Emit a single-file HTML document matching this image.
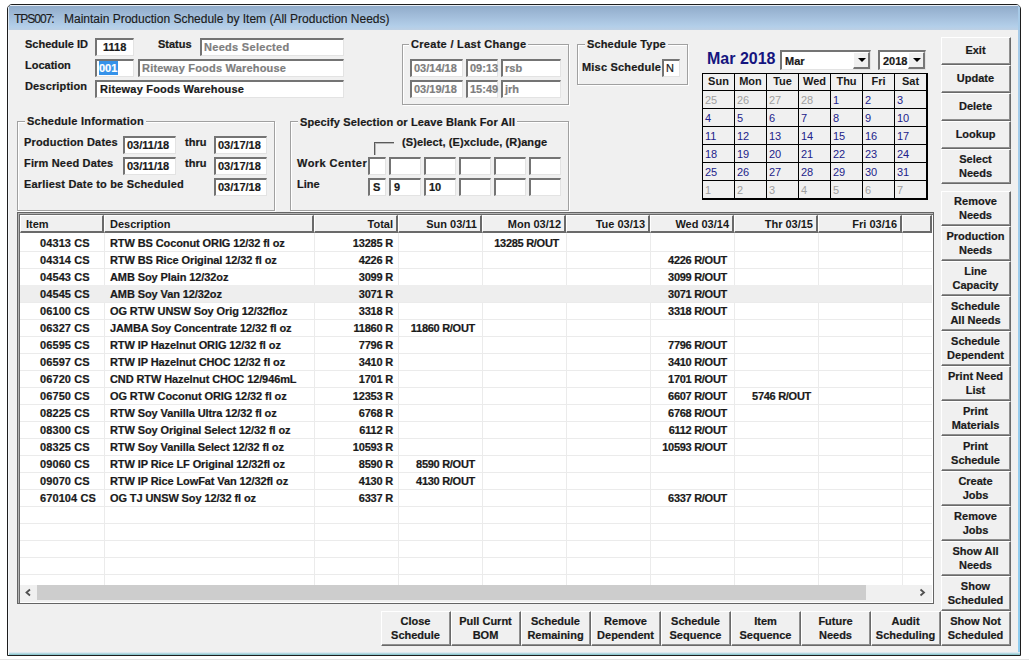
<!DOCTYPE html><html><head><meta charset="utf-8"><style>
*{margin:0;padding:0;box-sizing:border-box}
html,body{width:1029px;height:661px;overflow:hidden;background:#fff;font-family:"Liberation Sans",sans-serif}
.a{position:absolute}
.t{position:absolute;white-space:nowrap;font-weight:bold;font-size:11px;color:#1a1a1a;line-height:13px}
.box{position:absolute;background:#fff;border-top:2px solid #747474;border-left:2px solid #747474;border-right:1px solid #e3e3e3;border-bottom:1px solid #e3e3e3}
.grp{position:absolute;border:1px solid #a0a0a0;box-shadow:1px 1px 0 #fff, inset 1px 1px 0 #fff}
.gt{position:absolute;background:#f0f0f0;padding:0 2px 0 2px;font-weight:bold;font-size:11px;color:#1a1a1a;white-space:nowrap;line-height:13px}
.btn{position:absolute;background:#f0f0f0;border-top:1px solid #fff;border-left:1px solid #fff;border-right:1px solid #696969;border-bottom:1px solid #696969;box-shadow:inset -1px -1px 0 #8f8f8f;font-weight:bold;font-size:11px;color:#1a1a1a;text-align:center;line-height:14px;display:flex;align-items:center;justify-content:center;white-space:nowrap;padding-bottom:2px;padding-right:1px}
.gray{color:#8a8a8a}
.t,.gt,.btn,.box span{-webkit-text-stroke:0.2px currentColor}
</style></head><body>
<div class="a" style="left:0;top:659px;width:1029px;height:1px;background:#e4e4e4"></div>
<div class="a" style="left:7px;top:4px;width:1014px;height:652px;border:1px solid #1e1e1e;border-radius:5px 5px 0 0;background:#f0f0f0;overflow:hidden"><div class="a" style="left:0;top:0;width:1012px;height:25px;background:linear-gradient(#91acca 0%,#a3bedb 45%,#b3cfe9 85%,#bdd0e4 100%);border-top:1px solid #e8eef5;border-left:1px solid #dde8f3"></div><div class="a" style="left:1010px;top:0;width:2px;height:650px;background:linear-gradient(#a8cbe8,#8ecdf0)"></div><div class="a" style="left:0;top:647px;width:1012px;height:3px;background:linear-gradient(#eceff7,#7cc0c8)"></div><div class="a" style="left:0;top:25px;width:1px;height:625px;background:#f6f8fb"></div></div>
<div class="a" style="left:14px;top:12px;font-size:12px;color:#1b1b1b;white-space:nowrap;letter-spacing:-1px;line-height:15px;-webkit-text-stroke:0.15px #1b1b1b">TPS007:</div>
<div class="a" style="left:64px;top:12px;font-size:12px;color:#1b1b1b;white-space:nowrap;line-height:15px;-webkit-text-stroke:0.15px #1b1b1b">Maintain Production Schedule by Item (All Production Needs)</div>
<div class="t" style="left:25px;top:38px;">Schedule ID</div>
<div class="t" style="left:25px;top:59px;">Location</div>
<div class="t" style="left:25px;top:80px;letter-spacing:0.15px">Description</div>
<div class="t" style="left:158px;top:38px;">Status</div>
<div class="box" style="left:95px;top:38px;width:39px;height:18px"><span class="a" style="left:6px;top:1px;font-size:11px;font-weight:bold;color:#1a1a1a;white-space:nowrap;line-height:13px;">1118</span></div>
<div class="box" style="left:95px;top:59px;width:39px;height:18px"><span class="a" style="left:2px;top:0px;width:19px;height:14px;background:#3592ea"></span><span class="a" style="left:2px;top:1px;font-size:11px;font-weight:bold;color:#fff;line-height:13px">001</span></div>
<div class="box" style="left:138px;top:59px;width:206px;height:18px"><span class="a" style="left:2px;top:1px;font-size:11px;font-weight:bold;color:#7e7e7e;white-space:nowrap;line-height:13px;letter-spacing:0.2px">Riteway Foods Warehouse</span></div>
<div class="box" style="left:200px;top:38px;width:144px;height:18px"><span class="a" style="left:2px;top:1px;font-size:11px;font-weight:bold;color:#7e7e7e;white-space:nowrap;line-height:13px;letter-spacing:0.3px">Needs Selected</span></div>
<div class="box" style="left:95px;top:80px;width:249px;height:18px"><span class="a" style="left:3px;top:1px;font-size:11px;font-weight:bold;color:#1a1a1a;white-space:nowrap;line-height:13px;letter-spacing:0.2px">Riteway Foods Warehouse</span></div>
<div class="grp" style="left:402px;top:44px;width:167px;height:61px"></div>
<div class="gt" style="left:409px;top:38px;letter-spacing:0.3px">Create / Last Change</div>
<div class="box" style="left:410px;top:59px;width:53px;height:18px"><span class="a" style="left:2px;top:1px;font-size:11px;font-weight:bold;color:#7e7e7e;white-space:nowrap;line-height:13px;">03/14/18</span></div>
<div class="box" style="left:466px;top:59px;width:32px;height:18px"><span class="a" style="left:2px;top:1px;font-size:11px;font-weight:bold;color:#7e7e7e;white-space:nowrap;line-height:13px;">09:13</span></div>
<div class="box" style="left:501px;top:59px;width:60px;height:18px"><span class="a" style="left:2px;top:1px;font-size:11px;font-weight:bold;color:#7e7e7e;white-space:nowrap;line-height:13px;">rsb</span></div>
<div class="box" style="left:410px;top:80px;width:53px;height:18px"><span class="a" style="left:2px;top:1px;font-size:11px;font-weight:bold;color:#7e7e7e;white-space:nowrap;line-height:13px;">03/19/18</span></div>
<div class="box" style="left:466px;top:80px;width:32px;height:18px"><span class="a" style="left:2px;top:1px;font-size:11px;font-weight:bold;color:#7e7e7e;white-space:nowrap;line-height:13px;">15:49</span></div>
<div class="box" style="left:501px;top:80px;width:60px;height:18px"><span class="a" style="left:2px;top:1px;font-size:11px;font-weight:bold;color:#7e7e7e;white-space:nowrap;line-height:13px;">jrh</span></div>
<div class="grp" style="left:577px;top:44px;width:111px;height:41px"></div>
<div class="gt" style="left:585px;top:38px;letter-spacing:0.15px">Schedule Type</div>
<div class="t" style="left:582px;top:61px;letter-spacing:0.2px">Misc Schedule</div>
<div class="box" style="left:662px;top:59px;width:18px;height:18px"><span class="a" style="left:2px;top:1px;font-size:11px;font-weight:normal;color:#1a1a1a;white-space:nowrap;line-height:13px;">N</span></div>
<div class="grp" style="left:17px;top:121px;width:258px;height:90px"></div>
<div class="gt" style="left:25px;top:115px;letter-spacing:0.22px">Schedule Information</div>
<div class="t" style="left:24px;top:136px;letter-spacing:0.17px">Production Dates</div>
<div class="t" style="left:24px;top:157px;letter-spacing:0.17px">Firm Need Dates</div>
<div class="t" style="left:24px;top:178px;letter-spacing:0.18px">Earliest Date to be Scheduled</div>
<div class="t" style="left:185px;top:136px;">thru</div>
<div class="t" style="left:185px;top:157px;">thru</div>
<div class="box" style="left:123px;top:136px;width:53px;height:18px"><span class="a" style="left:2px;top:1px;font-size:11px;font-weight:bold;color:#1a1a1a;white-space:nowrap;line-height:13px;">03/11/18</span></div>
<div class="box" style="left:214px;top:136px;width:53px;height:18px"><span class="a" style="left:2px;top:1px;font-size:11px;font-weight:bold;color:#1a1a1a;white-space:nowrap;line-height:13px;">03/17/18</span></div>
<div class="box" style="left:123px;top:157px;width:53px;height:18px"><span class="a" style="left:2px;top:1px;font-size:11px;font-weight:bold;color:#1a1a1a;white-space:nowrap;line-height:13px;">03/11/18</span></div>
<div class="box" style="left:214px;top:157px;width:53px;height:18px"><span class="a" style="left:2px;top:1px;font-size:11px;font-weight:bold;color:#1a1a1a;white-space:nowrap;line-height:13px;">03/17/18</span></div>
<div class="box" style="left:214px;top:178px;width:53px;height:18px"><span class="a" style="left:2px;top:1px;font-size:11px;font-weight:bold;color:#1a1a1a;white-space:nowrap;line-height:13px;">03/17/18</span></div>
<div class="grp" style="left:290px;top:121px;width:279px;height:90px"></div>
<div class="gt" style="left:298px;top:116px;letter-spacing:0.13px">Specify Selection or Leave Blank For All</div>
<div class="t" style="left:402px;top:136px;letter-spacing:0.1px">(S)elect, (E)xclude, (R)ange</div>
<div class="a" style="left:374px;top:142px;width:20px;height:1px;background:#5a5a5a"></div><div class="a" style="left:375px;top:143px;width:19px;height:1px;background:#b8b8b8"></div>
<div class="a" style="left:374px;top:142px;width:1px;height:13px;background:#5a5a5a"></div><div class="a" style="left:375px;top:143px;width:1px;height:12px;background:#b8b8b8"></div>
<div class="t" style="left:297px;top:157px;letter-spacing:0.45px">Work Center</div>
<div class="t" style="left:297px;top:178px;">Line</div>
<div class="box" style="left:368px;top:157px;width:18px;height:18px"></div>
<div class="box" style="left:389px;top:157px;width:32px;height:18px"></div>
<div class="box" style="left:424px;top:157px;width:32px;height:18px"></div>
<div class="box" style="left:459px;top:157px;width:32px;height:18px"></div>
<div class="box" style="left:494px;top:157px;width:32px;height:18px"></div>
<div class="box" style="left:529px;top:157px;width:32px;height:18px"></div>
<div class="box" style="left:368px;top:178px;width:18px;height:18px"><span class="a" style="left:3px;top:1px;font-size:11px;font-weight:bold;color:#1a1a1a;white-space:nowrap;line-height:13px;">S</span></div>
<div class="box" style="left:389px;top:178px;width:32px;height:18px"><span class="a" style="left:3px;top:1px;font-size:11px;font-weight:bold;color:#1a1a1a;white-space:nowrap;line-height:13px;">9</span></div>
<div class="box" style="left:424px;top:178px;width:32px;height:18px"><span class="a" style="left:3px;top:1px;font-size:11px;font-weight:bold;color:#1a1a1a;white-space:nowrap;line-height:13px;">10</span></div>
<div class="box" style="left:459px;top:178px;width:32px;height:18px"></div>
<div class="box" style="left:494px;top:178px;width:32px;height:18px"></div>
<div class="box" style="left:529px;top:178px;width:32px;height:18px"></div>
<div class="a" style="left:707px;top:50px;font-size:16px;font-weight:bold;color:#15157f;white-space:nowrap;line-height:18px">Mar 2018</div>
<div class="box" style="left:780px;top:50px;width:91px;height:20px"><span class="a" style="left:3px;top:3px;font-size:11px;font-weight:bold;color:#1a1a1a;line-height:13px">Mar</span><span class="a" style="right:0;top:0;width:17px;height:17px;background:#f0f0f0;border-top:1px solid #fff;border-left:1px solid #fff;border-right:2px solid #777;border-bottom:2px solid #777"></span><span class="a" style="right:4px;top:6px;width:0;height:0;border-left:4px solid transparent;border-right:4px solid transparent;border-top:4px solid #000"></span></div>
<div class="box" style="left:878px;top:50px;width:48px;height:20px"><span class="a" style="left:3px;top:3px;font-size:11px;font-weight:bold;color:#1a1a1a;line-height:13px">2018</span><span class="a" style="right:0;top:0;width:17px;height:17px;background:#f0f0f0;border-top:1px solid #fff;border-left:1px solid #fff;border-right:2px solid #777;border-bottom:2px solid #777"></span><span class="a" style="right:4px;top:6px;width:0;height:0;border-left:4px solid transparent;border-right:4px solid transparent;border-top:4px solid #000"></span></div>
<div class="a" style="left:702px;top:73px;width:226px;height:127px;background:#000"></div>
<div class="a" style="left:703px;top:74px;width:31px;height:16px;background:#f0f0f0"><span style="display:block;text-align:center;font-size:11px;font-weight:bold;color:#1a1a1a;line-height:13px;padding-top:1px">Sun</span></div>
<div class="a" style="left:735px;top:74px;width:31px;height:16px;background:#f0f0f0"><span style="display:block;text-align:center;font-size:11px;font-weight:bold;color:#1a1a1a;line-height:13px;padding-top:1px">Mon</span></div>
<div class="a" style="left:767px;top:74px;width:31px;height:16px;background:#f0f0f0"><span style="display:block;text-align:center;font-size:11px;font-weight:bold;color:#1a1a1a;line-height:13px;padding-top:1px">Tue</span></div>
<div class="a" style="left:799px;top:74px;width:31px;height:16px;background:#f0f0f0"><span style="display:block;text-align:center;font-size:11px;font-weight:bold;color:#1a1a1a;line-height:13px;padding-top:1px">Wed</span></div>
<div class="a" style="left:831px;top:74px;width:31px;height:16px;background:#f0f0f0"><span style="display:block;text-align:center;font-size:11px;font-weight:bold;color:#1a1a1a;line-height:13px;padding-top:1px">Thu</span></div>
<div class="a" style="left:863px;top:74px;width:31px;height:16px;background:#f0f0f0"><span style="display:block;text-align:center;font-size:11px;font-weight:bold;color:#1a1a1a;line-height:13px;padding-top:1px">Fri</span></div>
<div class="a" style="left:895px;top:74px;width:31px;height:16px;background:#f0f0f0"><span style="display:block;text-align:center;font-size:11px;font-weight:bold;color:#1a1a1a;line-height:13px;padding-top:1px">Sat</span></div>
<div class="a" style="left:703px;top:91px;width:31px;height:17px;background:#f0f0f0"><span class="a" style="left:2px;top:3px;font-size:11px;color:#a0a0a0;line-height:13px">25</span></div>
<div class="a" style="left:735px;top:91px;width:31px;height:17px;background:#f0f0f0"><span class="a" style="left:2px;top:3px;font-size:11px;color:#a0a0a0;line-height:13px">26</span></div>
<div class="a" style="left:767px;top:91px;width:31px;height:17px;background:#f0f0f0"><span class="a" style="left:2px;top:3px;font-size:11px;color:#a0a0a0;line-height:13px">27</span></div>
<div class="a" style="left:799px;top:91px;width:31px;height:17px;background:#f0f0f0"><span class="a" style="left:2px;top:3px;font-size:11px;color:#a0a0a0;line-height:13px">28</span></div>
<div class="a" style="left:831px;top:91px;width:31px;height:17px;background:#f0f0f0"><span class="a" style="left:2px;top:3px;font-size:11px;color:#22228a;line-height:13px">1</span></div>
<div class="a" style="left:863px;top:91px;width:31px;height:17px;background:#f0f0f0"><span class="a" style="left:2px;top:3px;font-size:11px;color:#22228a;line-height:13px">2</span></div>
<div class="a" style="left:895px;top:91px;width:31px;height:17px;background:#f0f0f0"><span class="a" style="left:2px;top:3px;font-size:11px;color:#22228a;line-height:13px">3</span></div>
<div class="a" style="left:703px;top:109px;width:31px;height:17px;background:#f0f0f0"><span class="a" style="left:2px;top:3px;font-size:11px;color:#22228a;line-height:13px">4</span></div>
<div class="a" style="left:735px;top:109px;width:31px;height:17px;background:#f0f0f0"><span class="a" style="left:2px;top:3px;font-size:11px;color:#22228a;line-height:13px">5</span></div>
<div class="a" style="left:767px;top:109px;width:31px;height:17px;background:#f0f0f0"><span class="a" style="left:2px;top:3px;font-size:11px;color:#22228a;line-height:13px">6</span></div>
<div class="a" style="left:799px;top:109px;width:31px;height:17px;background:#f0f0f0"><span class="a" style="left:2px;top:3px;font-size:11px;color:#22228a;line-height:13px">7</span></div>
<div class="a" style="left:831px;top:109px;width:31px;height:17px;background:#f0f0f0"><span class="a" style="left:2px;top:3px;font-size:11px;color:#22228a;line-height:13px">8</span></div>
<div class="a" style="left:863px;top:109px;width:31px;height:17px;background:#f0f0f0"><span class="a" style="left:2px;top:3px;font-size:11px;color:#22228a;line-height:13px">9</span></div>
<div class="a" style="left:895px;top:109px;width:31px;height:17px;background:#f0f0f0"><span class="a" style="left:2px;top:3px;font-size:11px;color:#22228a;line-height:13px">10</span></div>
<div class="a" style="left:703px;top:127px;width:31px;height:17px;background:#f0f0f0"><span class="a" style="left:2px;top:3px;font-size:11px;color:#22228a;line-height:13px">11</span></div>
<div class="a" style="left:735px;top:127px;width:31px;height:17px;background:#f0f0f0"><span class="a" style="left:2px;top:3px;font-size:11px;color:#22228a;line-height:13px">12</span></div>
<div class="a" style="left:767px;top:127px;width:31px;height:17px;background:#f0f0f0"><span class="a" style="left:2px;top:3px;font-size:11px;color:#22228a;line-height:13px">13</span></div>
<div class="a" style="left:799px;top:127px;width:31px;height:17px;background:#f0f0f0"><span class="a" style="left:2px;top:3px;font-size:11px;color:#22228a;line-height:13px">14</span></div>
<div class="a" style="left:831px;top:127px;width:31px;height:17px;background:#f0f0f0"><span class="a" style="left:2px;top:3px;font-size:11px;color:#22228a;line-height:13px">15</span></div>
<div class="a" style="left:863px;top:127px;width:31px;height:17px;background:#f0f0f0"><span class="a" style="left:2px;top:3px;font-size:11px;color:#22228a;line-height:13px">16</span></div>
<div class="a" style="left:895px;top:127px;width:31px;height:17px;background:#f0f0f0"><span class="a" style="left:2px;top:3px;font-size:11px;color:#22228a;line-height:13px">17</span></div>
<div class="a" style="left:703px;top:145px;width:31px;height:17px;background:#f0f0f0"><span class="a" style="left:2px;top:3px;font-size:11px;color:#22228a;line-height:13px">18</span></div>
<div class="a" style="left:735px;top:145px;width:31px;height:17px;background:#f0f0f0"><span class="a" style="left:2px;top:3px;font-size:11px;color:#22228a;line-height:13px">19</span></div>
<div class="a" style="left:767px;top:145px;width:31px;height:17px;background:#f0f0f0"><span class="a" style="left:2px;top:3px;font-size:11px;color:#22228a;line-height:13px">20</span></div>
<div class="a" style="left:799px;top:145px;width:31px;height:17px;background:#f0f0f0"><span class="a" style="left:2px;top:3px;font-size:11px;color:#22228a;line-height:13px">21</span></div>
<div class="a" style="left:831px;top:145px;width:31px;height:17px;background:#f0f0f0"><span class="a" style="left:2px;top:3px;font-size:11px;color:#22228a;line-height:13px">22</span></div>
<div class="a" style="left:863px;top:145px;width:31px;height:17px;background:#f0f0f0"><span class="a" style="left:2px;top:3px;font-size:11px;color:#22228a;line-height:13px">23</span></div>
<div class="a" style="left:895px;top:145px;width:31px;height:17px;background:#f0f0f0"><span class="a" style="left:2px;top:3px;font-size:11px;color:#22228a;line-height:13px">24</span></div>
<div class="a" style="left:703px;top:163px;width:31px;height:17px;background:#f0f0f0"><span class="a" style="left:2px;top:3px;font-size:11px;color:#22228a;line-height:13px">25</span></div>
<div class="a" style="left:735px;top:163px;width:31px;height:17px;background:#f0f0f0"><span class="a" style="left:2px;top:3px;font-size:11px;color:#22228a;line-height:13px">26</span></div>
<div class="a" style="left:767px;top:163px;width:31px;height:17px;background:#f0f0f0"><span class="a" style="left:2px;top:3px;font-size:11px;color:#22228a;line-height:13px">27</span></div>
<div class="a" style="left:799px;top:163px;width:31px;height:17px;background:#f0f0f0"><span class="a" style="left:2px;top:3px;font-size:11px;color:#22228a;line-height:13px">28</span></div>
<div class="a" style="left:831px;top:163px;width:31px;height:17px;background:#f0f0f0"><span class="a" style="left:2px;top:3px;font-size:11px;color:#22228a;line-height:13px">29</span></div>
<div class="a" style="left:863px;top:163px;width:31px;height:17px;background:#f0f0f0"><span class="a" style="left:2px;top:3px;font-size:11px;color:#22228a;line-height:13px">30</span></div>
<div class="a" style="left:895px;top:163px;width:31px;height:17px;background:#f0f0f0"><span class="a" style="left:2px;top:3px;font-size:11px;color:#22228a;line-height:13px">31</span></div>
<div class="a" style="left:703px;top:181px;width:31px;height:17px;background:#f0f0f0"><span class="a" style="left:2px;top:3px;font-size:11px;color:#a0a0a0;line-height:13px">1</span></div>
<div class="a" style="left:735px;top:181px;width:31px;height:17px;background:#f0f0f0"><span class="a" style="left:2px;top:3px;font-size:11px;color:#a0a0a0;line-height:13px">2</span></div>
<div class="a" style="left:767px;top:181px;width:31px;height:17px;background:#f0f0f0"><span class="a" style="left:2px;top:3px;font-size:11px;color:#a0a0a0;line-height:13px">3</span></div>
<div class="a" style="left:799px;top:181px;width:31px;height:17px;background:#f0f0f0"><span class="a" style="left:2px;top:3px;font-size:11px;color:#a0a0a0;line-height:13px">4</span></div>
<div class="a" style="left:831px;top:181px;width:31px;height:17px;background:#f0f0f0"><span class="a" style="left:2px;top:3px;font-size:11px;color:#a0a0a0;line-height:13px">5</span></div>
<div class="a" style="left:863px;top:181px;width:31px;height:17px;background:#f0f0f0"><span class="a" style="left:2px;top:3px;font-size:11px;color:#a0a0a0;line-height:13px">6</span></div>
<div class="a" style="left:895px;top:181px;width:31px;height:17px;background:#f0f0f0"><span class="a" style="left:2px;top:3px;font-size:11px;color:#a0a0a0;line-height:13px">7</span></div>
<div class="btn" style="left:941px;top:37px;width:70px;height:28px">Exit</div>
<div class="btn" style="left:941px;top:65px;width:70px;height:28px">Update</div>
<div class="btn" style="left:941px;top:93px;width:70px;height:28px">Delete</div>
<div class="btn" style="left:941px;top:121px;width:70px;height:28px">Lookup</div>
<div class="btn" style="left:941px;top:149px;width:70px;height:35px">Select<br>Needs</div>
<div class="btn" style="left:941px;top:191px;width:70px;height:35px">Remove<br>Needs</div>
<div class="btn" style="left:941px;top:226px;width:70px;height:35px">Production<br>Needs</div>
<div class="btn" style="left:941px;top:261px;width:70px;height:35px">Line<br>Capacity</div>
<div class="btn" style="left:941px;top:296px;width:70px;height:35px">Schedule<br>All Needs</div>
<div class="btn" style="left:941px;top:331px;width:70px;height:35px">Schedule<br>Dependent</div>
<div class="btn" style="left:941px;top:366px;width:70px;height:35px">Print Need<br>List</div>
<div class="btn" style="left:941px;top:401px;width:70px;height:35px">Print<br>Materials</div>
<div class="btn" style="left:941px;top:436px;width:70px;height:35px">Print<br>Schedule</div>
<div class="btn" style="left:941px;top:471px;width:70px;height:35px">Create<br>Jobs</div>
<div class="btn" style="left:941px;top:506px;width:70px;height:35px">Remove<br>Jobs</div>
<div class="btn" style="left:941px;top:541px;width:70px;height:35px">Show All<br>Needs</div>
<div class="btn" style="left:941px;top:576px;width:70px;height:35px">Show<br>Scheduled</div>
<div class="btn" style="left:941px;top:611px;width:70px;height:35px">Show Not<br>Scheduled</div>
<div class="btn" style="left:381px;top:611px;width:70px;height:35px">Close<br>Schedule</div>
<div class="btn" style="left:451px;top:611px;width:70px;height:35px">Pull Curnt<br>BOM</div>
<div class="btn" style="left:521px;top:611px;width:70px;height:35px">Schedule<br>Remaining</div>
<div class="btn" style="left:591px;top:611px;width:70px;height:35px">Remove<br>Dependent</div>
<div class="btn" style="left:661px;top:611px;width:70px;height:35px">Schedule<br>Sequence</div>
<div class="btn" style="left:731px;top:611px;width:70px;height:35px">Item<br>Sequence</div>
<div class="btn" style="left:801px;top:611px;width:70px;height:35px">Future<br>Needs</div>
<div class="btn" style="left:871px;top:611px;width:70px;height:35px">Audit<br>Scheduling</div>
<div class="a" style="left:17px;top:212px;width:917px;height:392px;border:1px solid #646464;background:#fff"><div class="a" style="left:0;top:0;width:915px;height:1px;background:#b4b4b4"></div><div class="a" style="left:1px;top:1px;width:914px;height:1px;background:#6a6a6a"></div><div class="a" style="left:0;top:0;width:1px;height:390px;background:#b4b4b4"></div><div class="a" style="left:1px;top:1px;width:1px;height:389px;background:#6a6a6a"></div></div>
<div class="a" style="left:20px;top:215px;width:84px;height:18px;background:#f0f0f0;border-top:1px solid #fff;border-left:1px solid #fff;border-right:2px solid #6a6a6a;border-bottom:2px solid #6a6a6a;font-size:11px;font-weight:bold;color:#1a1a1a;text-align:left;padding-left:5px;line-height:13px;padding-top:2px;white-space:nowrap">Item</div>
<div class="a" style="left:104px;top:215px;width:210px;height:18px;background:#f0f0f0;border-top:1px solid #fff;border-left:1px solid #fff;border-right:2px solid #6a6a6a;border-bottom:2px solid #6a6a6a;font-size:11px;font-weight:bold;color:#1a1a1a;text-align:left;padding-left:5px;line-height:13px;padding-top:2px;white-space:nowrap">Description</div>
<div class="a" style="left:314px;top:215px;width:84px;height:18px;background:#f0f0f0;border-top:1px solid #fff;border-left:1px solid #fff;border-right:2px solid #6a6a6a;border-bottom:2px solid #6a6a6a;font-size:11px;font-weight:bold;color:#1a1a1a;text-align:right;padding-right:3px;line-height:13px;padding-top:2px;white-space:nowrap">Total</div>
<div class="a" style="left:398px;top:215px;width:84px;height:18px;background:#f0f0f0;border-top:1px solid #fff;border-left:1px solid #fff;border-right:2px solid #6a6a6a;border-bottom:2px solid #6a6a6a;font-size:11px;font-weight:bold;color:#1a1a1a;text-align:right;padding-right:3px;line-height:13px;padding-top:2px;white-space:nowrap">Sun 03/11</div>
<div class="a" style="left:482px;top:215px;width:84px;height:18px;background:#f0f0f0;border-top:1px solid #fff;border-left:1px solid #fff;border-right:2px solid #6a6a6a;border-bottom:2px solid #6a6a6a;font-size:11px;font-weight:bold;color:#1a1a1a;text-align:right;padding-right:3px;line-height:13px;padding-top:2px;white-space:nowrap">Mon 03/12</div>
<div class="a" style="left:566px;top:215px;width:84px;height:18px;background:#f0f0f0;border-top:1px solid #fff;border-left:1px solid #fff;border-right:2px solid #6a6a6a;border-bottom:2px solid #6a6a6a;font-size:11px;font-weight:bold;color:#1a1a1a;text-align:right;padding-right:3px;line-height:13px;padding-top:2px;white-space:nowrap">Tue 03/13</div>
<div class="a" style="left:650px;top:215px;width:84px;height:18px;background:#f0f0f0;border-top:1px solid #fff;border-left:1px solid #fff;border-right:2px solid #6a6a6a;border-bottom:2px solid #6a6a6a;font-size:11px;font-weight:bold;color:#1a1a1a;text-align:right;padding-right:3px;line-height:13px;padding-top:2px;white-space:nowrap">Wed 03/14</div>
<div class="a" style="left:734px;top:215px;width:84px;height:18px;background:#f0f0f0;border-top:1px solid #fff;border-left:1px solid #fff;border-right:2px solid #6a6a6a;border-bottom:2px solid #6a6a6a;font-size:11px;font-weight:bold;color:#1a1a1a;text-align:right;padding-right:3px;line-height:13px;padding-top:2px;white-space:nowrap">Thr 03/15</div>
<div class="a" style="left:818px;top:215px;width:84px;height:18px;background:#f0f0f0;border-top:1px solid #fff;border-left:1px solid #fff;border-right:2px solid #6a6a6a;border-bottom:2px solid #6a6a6a;font-size:11px;font-weight:bold;color:#1a1a1a;text-align:right;padding-right:3px;line-height:13px;padding-top:2px;white-space:nowrap">Fri 03/16</div>
<div class="a" style="left:902px;top:215px;width:30px;height:18px;background:#f0f0f0;border-top:1px solid #fff;border-left:1px solid #fff;border-right:2px solid #6a6a6a;border-bottom:2px solid #6a6a6a;font-size:11px;font-weight:bold;color:#1a1a1a;text-align:right;padding-right:3px;line-height:13px;padding-top:2px;white-space:nowrap"></div>
<div class="a" style="left:20px;top:251px;width:912px;height:1px;background:#ebebeb"></div>
<div class="a" style="left:20px;top:268px;width:912px;height:1px;background:#ebebeb"></div>
<div class="a" style="left:20px;top:285px;width:912px;height:1px;background:#ebebeb"></div>
<div class="a" style="left:20px;top:302px;width:912px;height:1px;background:#ebebeb"></div>
<div class="a" style="left:20px;top:319px;width:912px;height:1px;background:#ebebeb"></div>
<div class="a" style="left:20px;top:336px;width:912px;height:1px;background:#ebebeb"></div>
<div class="a" style="left:20px;top:353px;width:912px;height:1px;background:#ebebeb"></div>
<div class="a" style="left:20px;top:370px;width:912px;height:1px;background:#ebebeb"></div>
<div class="a" style="left:20px;top:387px;width:912px;height:1px;background:#ebebeb"></div>
<div class="a" style="left:20px;top:404px;width:912px;height:1px;background:#ebebeb"></div>
<div class="a" style="left:20px;top:421px;width:912px;height:1px;background:#ebebeb"></div>
<div class="a" style="left:20px;top:438px;width:912px;height:1px;background:#ebebeb"></div>
<div class="a" style="left:20px;top:455px;width:912px;height:1px;background:#ebebeb"></div>
<div class="a" style="left:20px;top:472px;width:912px;height:1px;background:#ebebeb"></div>
<div class="a" style="left:20px;top:489px;width:912px;height:1px;background:#ebebeb"></div>
<div class="a" style="left:20px;top:506px;width:912px;height:1px;background:#ebebeb"></div>
<div class="a" style="left:20px;top:523px;width:912px;height:1px;background:#ebebeb"></div>
<div class="a" style="left:20px;top:540px;width:912px;height:1px;background:#ebebeb"></div>
<div class="a" style="left:20px;top:557px;width:912px;height:1px;background:#ebebeb"></div>
<div class="a" style="left:20px;top:574px;width:912px;height:1px;background:#ebebeb"></div>
<div class="a" style="left:104px;top:233px;width:1px;height:352px;background:#ebebeb"></div>
<div class="a" style="left:314px;top:233px;width:1px;height:352px;background:#ebebeb"></div>
<div class="a" style="left:398px;top:233px;width:1px;height:352px;background:#ebebeb"></div>
<div class="a" style="left:482px;top:233px;width:1px;height:352px;background:#ebebeb"></div>
<div class="a" style="left:566px;top:233px;width:1px;height:352px;background:#ebebeb"></div>
<div class="a" style="left:650px;top:233px;width:1px;height:352px;background:#ebebeb"></div>
<div class="a" style="left:734px;top:233px;width:1px;height:352px;background:#ebebeb"></div>
<div class="a" style="left:818px;top:233px;width:1px;height:352px;background:#ebebeb"></div>
<div class="a" style="left:902px;top:233px;width:1px;height:352px;background:#ebebeb"></div>
<div class="a" style="left:20px;top:285px;width:912px;height:17px;background:#eeeeee"></div>
<div class="t" style="left:40px;top:237px;letter-spacing:0.1px">04313 CS</div>
<div class="t" style="left:110px;top:237px;letter-spacing:-0.1px">RTW BS Coconut ORIG 12/32 fl oz</div>
<div class="t" style="left:314px;width:79px;text-align:right;top:237px;letter-spacing:-0.2px">13285 R</div>
<div class="t" style="left:482px;width:77px;text-align:right;top:237px;letter-spacing:-0.28px">13285 R/OUT</div>
<div class="t" style="left:40px;top:254px;letter-spacing:0.1px">04314 CS</div>
<div class="t" style="left:110px;top:254px;letter-spacing:-0.1px">RTW BS Rice Original 12/32 fl oz</div>
<div class="t" style="left:314px;width:79px;text-align:right;top:254px;letter-spacing:-0.2px">4226 R</div>
<div class="t" style="left:650px;width:77px;text-align:right;top:254px;letter-spacing:-0.28px">4226 R/OUT</div>
<div class="t" style="left:40px;top:271px;letter-spacing:0.1px">04543 CS</div>
<div class="t" style="left:110px;top:271px;letter-spacing:-0.1px">AMB Soy Plain 12/32oz</div>
<div class="t" style="left:314px;width:79px;text-align:right;top:271px;letter-spacing:-0.2px">3099 R</div>
<div class="t" style="left:650px;width:77px;text-align:right;top:271px;letter-spacing:-0.28px">3099 R/OUT</div>
<div class="t" style="left:40px;top:288px;letter-spacing:0.1px">04545 CS</div>
<div class="t" style="left:110px;top:288px;letter-spacing:-0.1px">AMB Soy Van 12/32oz</div>
<div class="t" style="left:314px;width:79px;text-align:right;top:288px;letter-spacing:-0.2px">3071 R</div>
<div class="t" style="left:650px;width:77px;text-align:right;top:288px;letter-spacing:-0.28px">3071 R/OUT</div>
<div class="t" style="left:40px;top:305px;letter-spacing:0.1px">06100 CS</div>
<div class="t" style="left:110px;top:305px;letter-spacing:-0.1px">OG RTW UNSW Soy Orig 12/32floz</div>
<div class="t" style="left:314px;width:79px;text-align:right;top:305px;letter-spacing:-0.2px">3318 R</div>
<div class="t" style="left:650px;width:77px;text-align:right;top:305px;letter-spacing:-0.28px">3318 R/OUT</div>
<div class="t" style="left:40px;top:322px;letter-spacing:0.1px">06327 CS</div>
<div class="t" style="left:110px;top:322px;letter-spacing:-0.1px">JAMBA Soy Concentrate 12/32 fl oz</div>
<div class="t" style="left:314px;width:79px;text-align:right;top:322px;letter-spacing:-0.2px">11860 R</div>
<div class="t" style="left:398px;width:77px;text-align:right;top:322px;letter-spacing:-0.28px">11860 R/OUT</div>
<div class="t" style="left:40px;top:339px;letter-spacing:0.1px">06595 CS</div>
<div class="t" style="left:110px;top:339px;letter-spacing:-0.1px">RTW IP Hazelnut ORIG 12/32 fl oz</div>
<div class="t" style="left:314px;width:79px;text-align:right;top:339px;letter-spacing:-0.2px">7796 R</div>
<div class="t" style="left:650px;width:77px;text-align:right;top:339px;letter-spacing:-0.28px">7796 R/OUT</div>
<div class="t" style="left:40px;top:356px;letter-spacing:0.1px">06597 CS</div>
<div class="t" style="left:110px;top:356px;letter-spacing:-0.1px">RTW IP Hazelnut CHOC 12/32 fl oz</div>
<div class="t" style="left:314px;width:79px;text-align:right;top:356px;letter-spacing:-0.2px">3410 R</div>
<div class="t" style="left:650px;width:77px;text-align:right;top:356px;letter-spacing:-0.28px">3410 R/OUT</div>
<div class="t" style="left:40px;top:373px;letter-spacing:0.1px">06720 CS</div>
<div class="t" style="left:110px;top:373px;letter-spacing:-0.1px">CND RTW Hazelnut CHOC 12/946mL</div>
<div class="t" style="left:314px;width:79px;text-align:right;top:373px;letter-spacing:-0.2px">1701 R</div>
<div class="t" style="left:650px;width:77px;text-align:right;top:373px;letter-spacing:-0.28px">1701 R/OUT</div>
<div class="t" style="left:40px;top:390px;letter-spacing:0.1px">06750 CS</div>
<div class="t" style="left:110px;top:390px;letter-spacing:-0.1px">OG RTW Coconut ORIG 12/32 fl oz</div>
<div class="t" style="left:314px;width:79px;text-align:right;top:390px;letter-spacing:-0.2px">12353 R</div>
<div class="t" style="left:650px;width:77px;text-align:right;top:390px;letter-spacing:-0.28px">6607 R/OUT</div>
<div class="t" style="left:734px;width:77px;text-align:right;top:390px;letter-spacing:-0.28px">5746 R/OUT</div>
<div class="t" style="left:40px;top:407px;letter-spacing:0.1px">08225 CS</div>
<div class="t" style="left:110px;top:407px;letter-spacing:-0.1px">RTW Soy Vanilla Ultra 12/32 fl oz</div>
<div class="t" style="left:314px;width:79px;text-align:right;top:407px;letter-spacing:-0.2px">6768 R</div>
<div class="t" style="left:650px;width:77px;text-align:right;top:407px;letter-spacing:-0.28px">6768 R/OUT</div>
<div class="t" style="left:40px;top:424px;letter-spacing:0.1px">08300 CS</div>
<div class="t" style="left:110px;top:424px;letter-spacing:-0.1px">RTW Soy Original Select 12/32 fl oz</div>
<div class="t" style="left:314px;width:79px;text-align:right;top:424px;letter-spacing:-0.2px">6112 R</div>
<div class="t" style="left:650px;width:77px;text-align:right;top:424px;letter-spacing:-0.28px">6112 R/OUT</div>
<div class="t" style="left:40px;top:441px;letter-spacing:0.1px">08325 CS</div>
<div class="t" style="left:110px;top:441px;letter-spacing:-0.1px">RTW Soy Vanilla Select 12/32 fl oz</div>
<div class="t" style="left:314px;width:79px;text-align:right;top:441px;letter-spacing:-0.2px">10593 R</div>
<div class="t" style="left:650px;width:77px;text-align:right;top:441px;letter-spacing:-0.28px">10593 R/OUT</div>
<div class="t" style="left:40px;top:458px;letter-spacing:0.1px">09060 CS</div>
<div class="t" style="left:110px;top:458px;letter-spacing:-0.1px">RTW IP Rice LF Original 12/32fl oz</div>
<div class="t" style="left:314px;width:79px;text-align:right;top:458px;letter-spacing:-0.2px">8590 R</div>
<div class="t" style="left:398px;width:77px;text-align:right;top:458px;letter-spacing:-0.28px">8590 R/OUT</div>
<div class="t" style="left:40px;top:475px;letter-spacing:0.1px">09070 CS</div>
<div class="t" style="left:110px;top:475px;letter-spacing:-0.1px">RTW IP Rice LowFat Van 12/32fl oz</div>
<div class="t" style="left:314px;width:79px;text-align:right;top:475px;letter-spacing:-0.2px">4130 R</div>
<div class="t" style="left:398px;width:77px;text-align:right;top:475px;letter-spacing:-0.28px">4130 R/OUT</div>
<div class="t" style="left:40px;top:492px;letter-spacing:0.1px">670104 CS</div>
<div class="t" style="left:110px;top:492px;letter-spacing:-0.1px">OG TJ UNSW Soy 12/32 fl oz</div>
<div class="t" style="left:314px;width:79px;text-align:right;top:492px;letter-spacing:-0.2px">6337 R</div>
<div class="t" style="left:650px;width:77px;text-align:right;top:492px;letter-spacing:-0.28px">6337 R/OUT</div>
<div class="a" style="left:20px;top:585px;width:912px;height:17px;background:#f0f0f0"></div>
<div class="a" style="left:37px;top:585px;width:829px;height:15px;background:#cdcdcd"></div>
<svg class="a" style="left:20px;top:585px" width="17" height="15"><path d="M10 4.5 L6.5 7.5 L10 10.5" stroke="#505050" stroke-width="1.8" fill="none"/></svg>
<svg class="a" style="left:914px;top:585px" width="17" height="15"><path d="M6.5 4.5 L10 7.5 L6.5 10.5" stroke="#505050" stroke-width="1.8" fill="none"/></svg>
</body></html>
